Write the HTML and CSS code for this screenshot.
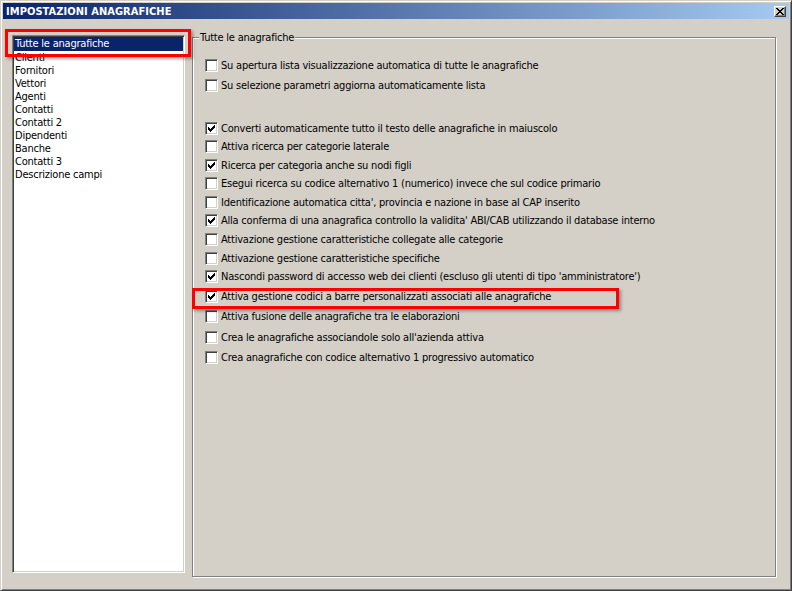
FILE: index.html
```html
<!DOCTYPE html>
<html lang="it">
<head>
    <meta charset="UTF-8">
    <title>Impostazioni anagrafiche</title>
    <link rel="stylesheet" href="styles.css">
</head>
<body>
    <div class="window">
        <div class="titlebar">
            <span class="title">IMPOSTAZIONI ANAGRAFICHE</span>
            <button class="close-btn" aria-label="Chiudi">
                <svg width="8" height="7" viewBox="0 0 8 7" shape-rendering="crispEdges">
                    <path d="M0 0h2v1H0zM6 0h2v1H6zM1 1h2v1H1zM5 1h2v1H5zM2 2h4v1H2zM3 3h2v1H3zM2 4h4v1H2zM1 5h2v1H1zM5 5h2v1H5zM0 6h2v1H0zM6 6h2v1H6z" fill="#000"/>
                </svg>
            </button>
        </div>

        <div class="content">
            <!-- elenco categorie -->
            <ul class="category-list">
                <li class="selected">Tutte le anagrafiche</li>
                <li>Clienti</li>
                <li>Fornitori</li>
                <li>Vettori</li>
                <li>Agenti</li>
                <li>Contatti</li>
                <li>Contatti 2</li>
                <li>Dipendenti</li>
                <li>Banche</li>
                <li>Contatti 3</li>
                <li>Descrizione campi</li>
            </ul>

            <!-- opzioni -->
            <div class="group">
                <span class="legend">Tutte le anagrafiche</span>

                <div class="opts opts-top">
                    <label class="opt"><span class="chk"></span>Su apertura lista visualizzazione automatica di tutte le anagrafiche</label>
                    <label class="opt"><span class="chk"></span>Su selezione parametri aggiorna automaticamente lista</label>
                </div>

                <div class="opts opts-mid">
                    <label class="opt"><span class="chk"><svg class="tick" width="7" height="7" viewBox="0 0 7 7" shape-rendering="crispEdges"><path d="M0 2h1v3H0zM1 3h1v3H1zM2 4h1v3H2zM3 3h1v3H3zM4 2h1v3H4zM5 1h1v3H5zM6 0h1v3H6z"/></svg></span>Converti automaticamente tutto il testo delle anagrafiche in maiuscolo</label>
                    <label class="opt"><span class="chk"></span>Attiva ricerca per categorie laterale</label>
                    <label class="opt"><span class="chk"><svg class="tick" width="7" height="7" viewBox="0 0 7 7" shape-rendering="crispEdges"><path d="M0 2h1v3H0zM1 3h1v3H1zM2 4h1v3H2zM3 3h1v3H3zM4 2h1v3H4zM5 1h1v3H5zM6 0h1v3H6z"/></svg></span>Ricerca per categoria anche su nodi figli</label>
                    <label class="opt"><span class="chk"></span>Esegui ricerca su codice alternativo 1 (numerico) invece che sul codice primario</label>
                    <label class="opt"><span class="chk"></span>Identificazione automatica citta', provincia e nazione in base al CAP inserito</label>
                    <label class="opt"><span class="chk"><svg class="tick" width="7" height="7" viewBox="0 0 7 7" shape-rendering="crispEdges"><path d="M0 2h1v3H0zM1 3h1v3H1zM2 4h1v3H2zM3 3h1v3H3zM4 2h1v3H4zM5 1h1v3H5zM6 0h1v3H6z"/></svg></span>Alla conferma di una anagrafica controllo la validita' ABI/CAB utilizzando il database interno</label>
                    <label class="opt"><span class="chk"></span>Attivazione gestione caratteristiche collegate alle categorie</label>
                    <label class="opt"><span class="chk"></span>Attivazione gestione caratteristiche specifiche</label>
                    <label class="opt"><span class="chk"><svg class="tick" width="7" height="7" viewBox="0 0 7 7" shape-rendering="crispEdges"><path d="M0 2h1v3H0zM1 3h1v3H1zM2 4h1v3H2zM3 3h1v3H3zM4 2h1v3H4zM5 1h1v3H5zM6 0h1v3H6z"/></svg></span>Nascondi password di accesso web dei clienti (escluso gli utenti di tipo 'amministratore')</label>
                </div>

                <div class="opts opts-end">
                    <label class="opt"><span class="chk"><svg class="tick" width="7" height="7" viewBox="0 0 7 7" shape-rendering="crispEdges"><path d="M0 2h1v3H0zM1 3h1v3H1zM2 4h1v3H2zM3 3h1v3H3zM4 2h1v3H4zM5 1h1v3H5zM6 0h1v3H6z"/></svg></span>Attiva gestione codici a barre personalizzati associati alle anagrafiche</label>
                    <label class="opt"><span class="chk"></span>Attiva fusione delle anagrafiche tra le elaborazioni</label>
                    <label class="opt"><span class="chk"></span>Crea le anagrafiche associandole solo all'azienda attiva</label>
                    <label class="opt"><span class="chk"></span>Crea anagrafiche con codice alternativo 1 progressivo automatico</label>
                </div>
            </div>
        </div>

        <!-- evidenziazioni rosse -->
        <div class="mark mark-list"></div>
        <div class="mark mark-row"></div>
    </div>
</body>
</html>
```

FILE: styles.css
```css
html, body {
    margin: 0;
    padding: 0;
}

body {
    font-family: "DejaVu Sans Condensed", "Liberation Sans", sans-serif;
    font-size: 11px;
    letter-spacing: -0.22px;
    color: #000;
    background-color: #d4d0c8;
}

.window {
    position: relative;
    width: 792px;
    height: 591px;
    box-sizing: border-box;
    padding: 2px;
    border: 1px solid;
    border-color: #d4d0c8 #404040 #404040 #d4d0c8;
    box-shadow: inset 1px 1px #fff, inset -1px -1px #808080;
    background-color: #d4d0c8;
    display: flex;
    flex-direction: column;
}

/* Title bar */
.titlebar {
    height: 16px;
    display: flex;
    align-items: center;
    justify-content: space-between;
    padding: 0 3px 0 3px;
    background: linear-gradient(to right, #0a246a, #a6caf0);
    color: #fff;
}

.title {
    font-weight: bold;
    font-size: 11px;
    letter-spacing: 0.05px;
}

.close-btn {
    width: 12px;
    height: 11px;
    padding: 0;
    margin: 0;
    border: 1px solid;
    border-color: #fff #404040 #404040 #fff;
    box-shadow: inset -1px -1px #808080;
    background-color: #d4d0c8;
    display: flex;
    align-items: center;
    justify-content: center;
}

.close-btn svg {
    display: block;
}

/* Body */
.content {
    flex: 1;
    display: flex;
    padding: 16px 13px 11px 9px;
    min-height: 0;
}

.category-list {
    width: 173px;
    box-sizing: border-box;
    margin: 0 0 4px 0;
    padding: 1px 0 0 0;
    list-style: none;
    background-color: #fff;
    border: 1px solid;
    border-color: #808080 #fff #fff #808080;
    box-shadow: inset 1px 1px #404040, inset -1px -1px #d4d0c8;
}

.category-list li {
    height: 13px;
    line-height: 13px;
    margin: 0 1px 0 1px;
    padding-left: 1px;
    white-space: nowrap;
}

.category-list li.selected {
    height: 14px;
    line-height: 14px;
    background-color: #0a246a;
    color: #fff;
}

.group {
    position: relative;
    flex: 1;
    margin: 2px 0 0 7px;
    padding: 21px 0 0 12px;
    border: 1px solid #808080;
    box-shadow: inset 1px 1px #fff, 1px 1px #fff;
}

.legend {
    position: absolute;
    top: -7px;
    left: 6px;
    padding: 0 1px;
    line-height: 13px;
    background-color: #d4d0c8;
}

.opts {
    display: flex;
    flex-direction: column;
}

.opts-top {
    gap: 7px;
}

.opts-mid {
    gap: 5.6px;
    margin-top: 29.5px;
}

.opts-end {
    gap: 7.4px;
    margin-top: 6.5px;
}

.opt {
    height: 13px;
    display: flex;
    align-items: center;
    white-space: nowrap;
}

.chk {
    width: 13px;
    height: 13px;
    flex: none;
    box-sizing: border-box;
    margin-right: 3px;
    border: 1px solid;
    border-color: #808080 #fff #fff #808080;
    box-shadow: inset 1px 1px #404040, inset -1px -1px #d4d0c8;
    background-color: #fff;
}

.tick {
    display: block;
    margin: 2px 0 0 2px;
    fill: #000;
}

/* Red highlight frames */
.mark {
    position: absolute;
    box-sizing: border-box;
    border: 3px solid #ff0000;
    box-shadow: 2px 2px 3px rgba(0, 0, 0, 0.35);
    pointer-events: none;
}

.mark-list {
    left: 4px;
    top: 28px;
    width: 186px;
    height: 28px;
}

.mark-row {
    left: 191px;
    top: 287px;
    width: 427px;
    height: 21px;
}
```
